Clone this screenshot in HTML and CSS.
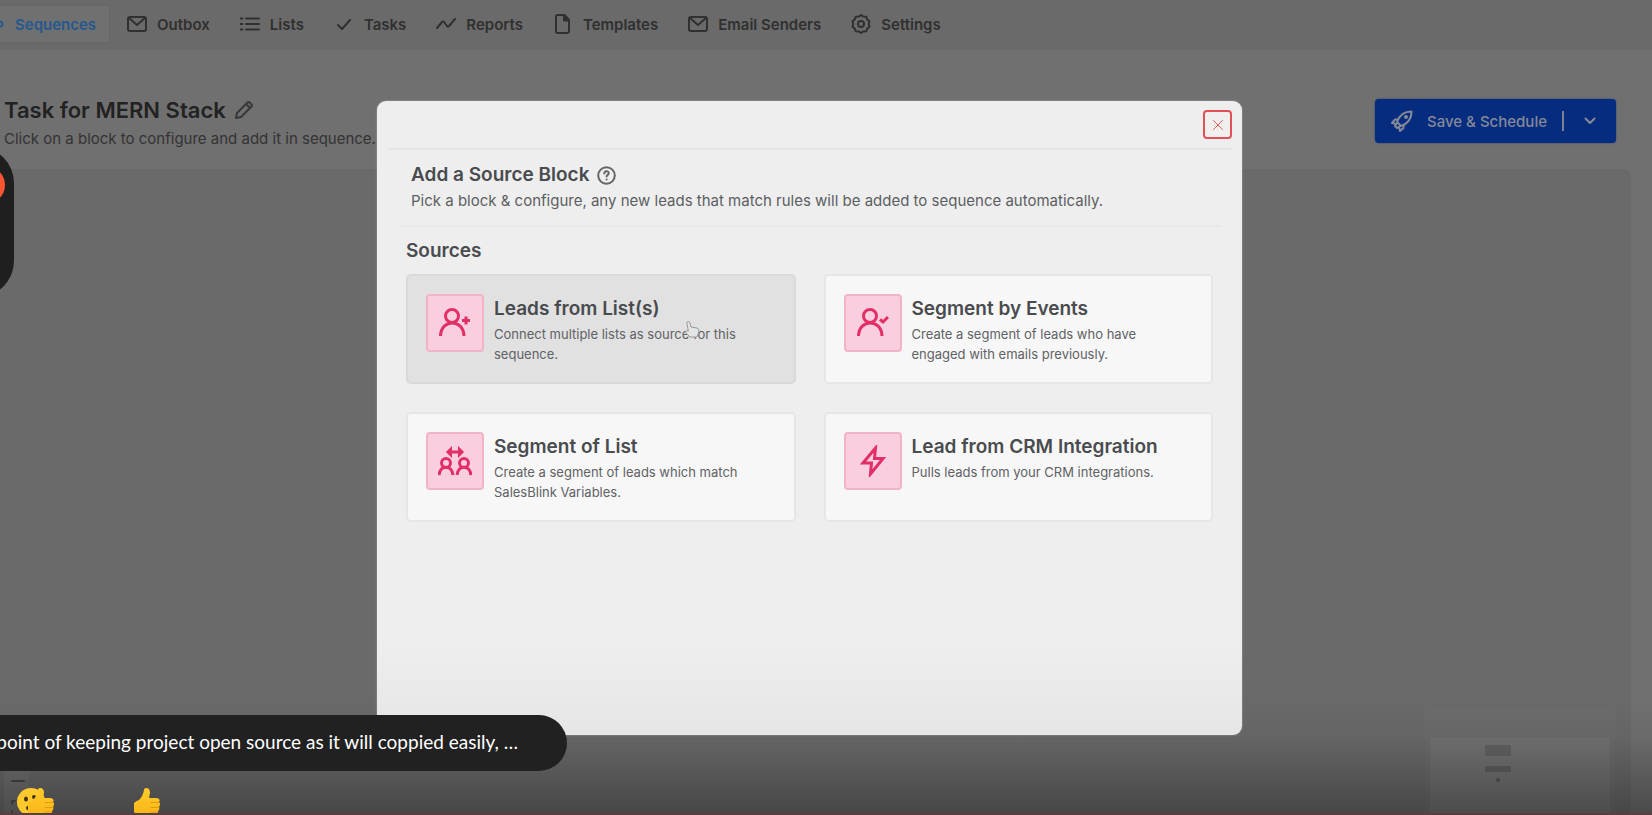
FILE: index.html
```html
<!DOCTYPE html>
<html lang="en">
<head>
<meta charset="utf-8">
<title>Task for MERN Stack</title>
<link rel="stylesheet" href="styles.css">
</head>
<body>
<div class="app">
  <nav class="nav">
    <a class="nav-item active" href="#"><svg class="tail" width="5" height="12" viewBox="0 0 5 12"><circle cx="0" cy="6" r="2.5"/></svg>Sequences</a>
    <a class="nav-item" href="#"><svg class="icon" viewBox="0 0 20 20"><rect x="1" y="3" width="18" height="14" rx="2"/><path d="M2 4l8 7 8-7"/></svg>Outbox</a>
    <a class="nav-item" href="#"><svg class="icon" viewBox="0 0 20 20"><path d="M6 4.500h13M6 10h13M6 15.500h13M.500 4.500h2M.500 10h2M.500 15.500h2"/></svg>Lists</a>
    <a class="nav-item" href="#"><svg class="icon" viewBox="0 0 20 20"><path d="M4 11l4 4 8-9"/></svg>Tasks</a>
    <a class="nav-item" href="#"><svg class="icon" viewBox="0 0 20 20"><path d="M1 14l5-6q1-1 2 0l3 4q1 1 2 0l6-7"/></svg>Reports</a>
    <a class="nav-item" href="#"><svg class="icon" viewBox="0 0 20 20"><path d="M11.500 1H5a2 2 0 0 0-2 2v14a2 2 0 0 0 2 2h9a2 2 0 0 0 2-2V6z"/><path class="dark" d="M11 1v5.500h5z"/></svg>Templates</a>
    <a class="nav-item" href="#"><svg class="icon" viewBox="0 0 20 20"><rect x="1" y="3" width="18" height="14" rx="2"/><path d="M2 4l8 7 8-7"/></svg>Email Senders</a>
    <a class="nav-item" href="#"><svg class="icon" viewBox="0 0 20 20"><path d="M10 1l2.400 1.600 2.900.100.900 2.700 2.300 1.800L17.700 10l.800 2.800-2.300 1.800-.900 2.700-2.900.100L10 19l-2.400-1.600-2.900-.100-.900-2.700-2.300-1.800L2.300 10l-.800-2.800 2.300-1.800.900-2.700 2.900-.100z"/><circle cx="10" cy="10" r="3"/></svg>Settings</a>
  </nav>
  <header class="page-head">
    <div>
      <h1 class="page-title">Task for MERN Stack <svg width="18" height="18" viewBox="0 0 18 18"><path d="M1 17l1-5L12.500 1.500q1-1 2 0l2 2q1 1 0 2L6 16zM11 3l4 4"/></svg></h1>
      <p class="page-sub">Click on a block to configure and add it in sequence.</p>
    </div>
    <button class="save" type="button">
      <svg width="22" height="22" viewBox="0 0 22 22"><path d="M6 12C8 6 13 1.500 20.500 1.500 20.500 9 16 14 10 16zM7 9.500H4L1 13l4 1M12.500 15v3L9 21l-1-4M5.500 13.500L4 16l2 2 2.500-1.500"/><circle cx="15" cy="7" r="1"/></svg>
      <span>Save &amp; Schedule</span><i class="divider"></i>
      <svg class="chev" width="12" height="8" viewBox="0 0 12 8"><path d="M1.500 1.500L6 6l4.500-4.500"/></svg>
    </button>
  </header>
  <main class="canvas">
    <div class="minimap"><div class="minimap-view"><i class="node tall"></i><i class="node"></i><i class="dot"></i></div></div>
  </main>
</div>
<div class="fade"></div>
<div class="zoom-controls"><svg width="14" height="36" viewBox="0 0 14 36"><path d="M1 3h12M1 26v-3h3M10 23h3v3M1 33v3M13 33v3"/></svg></div>

<div class="overlay">
  <section class="modal" role="dialog" aria-labelledby="modal-title">
    <div class="modal-bar"><button class="close" type="button" aria-label="Close"><svg width="12" height="12" viewBox="0 0 12 12"><path d="M1.500 1.500l9 9M10.500 1.500l-9 9"/></svg></button></div>
    <div class="modal-head">
      <h2 class="modal-title" id="modal-title">Add a Source Block <svg width="19" height="19" viewBox="0 0 19 19"><circle cx="9.500" cy="9.500" r="8.300"/><path d="M7.300 7.500c0-3 4.500-3 4.500-.300 0 1.600-2.200 1.700-2.200 3.200M9.600 13.500v.100"/></svg></h2>
      <p class="modal-sub">Pick a block &amp; configure, any new leads that match rules will be added to sequence automatically.</p>
    </div>
    <div class="modal-body">
      <h3 class="section">Sources</h3>
      <div class="cards">
        <button class="card hover" type="button">
          <span class="tile"><svg width="32" height="32" viewBox="0 0 32 32"><circle cx="13" cy="9" r="6.500"/><path d="M1.500 29C2 11.500 24.500 11.500 25 29M23 13.500h8M27 9.500v8"/></svg></span>
          <span class="card-text"><strong>Leads from List(s)</strong><span>Connect multiple lists as source for this sequence.</span></span>
          <svg class="pointer" width="16" height="20" viewBox="0 0 16 20"><path d="M3 2q2-2 3 1l1 4 6 1q2 1 2 3l-2 6H6l-5-5q0-2 3-1z"/></svg>
        </button>
        <button class="card" type="button">
          <span class="tile"><svg width="32" height="32" viewBox="0 0 32 32"><circle cx="13" cy="9" r="6.500"/><path d="M1.500 29C2 11.500 24.500 11.500 25 29M23 12.500l3 2.500 5-5"/></svg></span>
          <span class="card-text"><strong>Segment by Events</strong><span>Create a segment of leads who have engaged with emails previously.</span></span>
        </button>
        <button class="card" type="button">
          <span class="tile"><svg width="34" height="32" viewBox="0 0 34 32"><circle cx="8" cy="18" r="4.500"/><circle cx="26" cy="18" r="4.500"/><path d="M1 30C2 19.500 14 19.500 15 30M19 30c1-10.500 13-10.500 14 0M12 7h10"/><path class="solid" d="M12.500 4.500v5L10 7zM21.500 4.500v5L24 7z"/></svg></span>
          <span class="card-text"><strong>Segment of List</strong><span>Create a segment of leads which match SalesBlink Variables.</span></span>
        </button>
        <button class="card" type="button">
          <span class="tile"><svg width="26" height="32" viewBox="0 0 26 32"><path d="M15.500 3L3 18h8.500l-1 11L23 13.500h-8.500z"/></svg></span>
          <span class="card-text"><strong>Lead from CRM Integration</strong><span>Pulls leads from your CRM integrations.</span></span>
        </button>
      </div>
    </div>
  </section>
</div>

<div class="recorder"><i></i></div>
<div class="comment">point of keeping project open source as it will coppied easily, …</div>
<svg class="reactions" width="160" height="28" viewBox="0 0 160 28">
  <defs>
    <linearGradient id="hand" x1="0" y1="0" x2="0" y2="1"><stop offset="0" stop-color="#ffcc2b"/><stop offset="1" stop-color="#f9b516"/></linearGradient>
    <g id="thumb">
      <path fill="url(#hand)" d="M0 15q2-2 5-3 4-4 5-10 0-2 2-2 4 0 4 5l-1 5h8q4 1 2 4 2 2 0 5 1 3-1 4 0 5-4 5H5q-5-1-5-5z"/>
      <path fill="none" stroke="#e39a0c" d="M25 14.500h-8M25 19.500h-8M24 24h-7"/>
    </g>
  </defs>
  <circle cx="31" cy="14" r="14" fill="#fdc92d"/><ellipse cx="26" cy="11" rx="2" ry="2.500" fill="#3f3314"/><ellipse cx="34" cy="9" rx="2" ry="2" fill="#3f3314"/><ellipse cx="28" cy="20" rx="2" ry="2" fill="#3f3314"/>
  <use href="#thumb" x="28"/><use href="#thumb" x="134"/>
</svg>
<div class="progress"></div>
</body>
</html>
```
FILE: styles.css
```css
* { box-sizing: border-box; }
body { margin: 0; height: 100vh; overflow: hidden; position: relative; background: #707070; font-family: Inter, "Liberation Sans", sans-serif; }
h1, h2, h3, p { margin: 0; font-weight: 600; }
button { font: inherit; cursor: pointer; }
svg { fill: none; stroke: currentColor; stroke-linecap: round; stroke-linejoin: round; flex: none; }
.app { height: 100%; display: flex; flex-direction: column; }
.nav { height: 50px; display: flex; align-items: center; gap: 30px; background: #6a6a6a; flex: none; padding-bottom: 2px; }
.nav-item { display: flex; align-items: center; gap: 10px; color: #303030; font-size: 15px; font-weight: 600; text-decoration: none; white-space: nowrap; }
.nav-item.active { height: 36px; background: #707070; color: #25588f; padding-right: 13px; margin-right: -12px; border-radius: 0 3px 3px 0; box-shadow: 0 0 2px #626262; }
.icon { width: 20px; height: 20px; stroke-width: 2; }
.tail { stroke-width: 2; }
.dark { fill: currentColor; }
.page-head { display: flex; justify-content: space-between; align-items: flex-start; padding: 48px 36px 20px 4px; }
.page-title { display: flex; align-items: center; gap: 9px; font-size: 22px; line-height: 24px; color: #222; }
.page-title svg { color: #383838; stroke-width: 2; }
.page-sub { margin-top: 7px; font-size: 15px; font-weight: 400; line-height: 20px; color: #333; }
.save { display: flex; align-items: center; width: 241px; height: 44px; margin-top: 1px; padding: 0 20px 0 16px; border: 0; border-radius: 4px; background: #062c80; color: #858998; font-size: 15px; font-weight: 500; box-shadow: 0 0 2px #203f80; white-space: nowrap; }
.save svg { stroke-width: 2; }
.save span { margin-left: 14px; }
.divider { width: 2px; height: 20px; margin-left: auto; background: #7c8095; }
.chev { margin-left: 20px; }
.canvas { flex: 1; margin-right: 21px; background: #6a6a6a; border-radius: 0 8px 0 0; display: flex; justify-content: flex-end; align-items: flex-end; padding-right: 16px; }
.minimap { width: 190px; height: 107px; background: #6c6c6c; padding: 30px 5px 0; }
.minimap-view { height: 100%; background: #727272; padding: 7px 0 0 55px; display: flex; flex-direction: column; gap: 10px; }
.node { width: 26px; height: 6px; background: #5e5e5e; border-radius: 1px; }
.node.tall { height: 11px; background: #626262; }
.dot { width: 4px; height: 4px; margin: -4px 0 0 11px; background: #555; border-radius: 2px; }
.fade { position: absolute; inset: auto 0 0; height: 120px; background: linear-gradient(transparent, rgba(0, 0, 0, .05) 35%, rgba(0, 0, 0, .34)); }
.zoom-controls { position: absolute; left: 4px; bottom: 0; width: 25px; height: 44px; padding: 7px 7px 0; background: rgba(255, 255, 255, .03); color: #383838; overflow: hidden; }
.zoom-controls svg { stroke-width: 2; }
.overlay { position: absolute; inset: 0; padding: 101px 33px 80px 0; display: flex; justify-content: center; }
.modal { width: 865px; background: linear-gradient(#eee 85%, #e6e6e6); border-radius: 9px; box-shadow: 0 0 2px #aaa; padding: 0 10px; }
.modal-bar { height: 49px; display: flex; justify-content: flex-end; align-items: center; border-bottom: 2px solid #e6e6e6; }
.close { width: 29px; height: 29px; padding: 0; display: grid; place-items: center; border: 2px solid #df5057; border-radius: 4px; background: #f1eeee; color: #e0605f; }
.modal-head { margin: 0 11px; padding: 13px 13px 14px; border-bottom: 2px solid #e9e9ea; }
.modal-title { display: flex; align-items: center; gap: 8px; color: #494b4e; font-size: 19px; line-height: 24px; }
.modal-title svg { stroke-width: 2; color: #666; }
.modal-sub { margin-top: 4px; font-size: 15px; line-height: 20px; font-weight: 400; color: #5c5e62; }
.modal-body { padding: 12px 19px 0; }
.section { font-size: 19px; line-height: 24px; color: #494b4e; }
.cards { margin-top: 11px; display: grid; grid-template-columns: 1fr 1fr; gap: 28px; }
.card { position: relative; display: flex; align-items: flex-start; gap: 10px; min-height: 110px; padding: 18px; text-align: left; background: #f7f7f7; border: 2px solid #e6e6e7; border-radius: 5px; }
.card.hover { background: #e1e1e1; border-color: #d9d9d9; }
.tile { width: 58px; height: 58px; flex: none; display: grid; place-items: center; background: #f9cfdf; border: 2px solid #f2b2c7; border-radius: 4px; color: #e22f67; }
.tile svg { stroke-width: 3; stroke-linecap: butt; stroke-linejoin: miter; }
.solid { fill: currentColor; }
.card-text { max-width: 254px; padding-top: 2px; display: flex; flex-direction: column; gap: 2px; font-size: 13px; line-height: 20px; color: #606265; }
.card-text strong { font-size: 19px; font-weight: 600; line-height: 26px; color: #494b4e; white-space: nowrap; }
.pointer { position: absolute; left: 276px; top: 44px; fill: #e4e4e4; color: #999; }
.recorder { position: absolute; left: -58px; top: 147px; width: 72px; height: 150px; border-radius: 36px; background: #1f1f1f; }
.recorder i { position: absolute; right: 9px; top: 19px; width: 38px; height: 38px; border-radius: 50%; background: #fb5634; }
.comment { position: absolute; left: -50px; bottom: 44px; width: 617px; height: 56px; border-radius: 28px; background: #212121; color: #fff; font: 19px/54px Lato, sans-serif; text-align: right; padding-right: 49px; white-space: nowrap; }
.reactions { position: absolute; left: 0; bottom: -1px; stroke: none; }
.progress { position: absolute; inset: auto 0 0; height: 2px; background: #583e43; }
```
